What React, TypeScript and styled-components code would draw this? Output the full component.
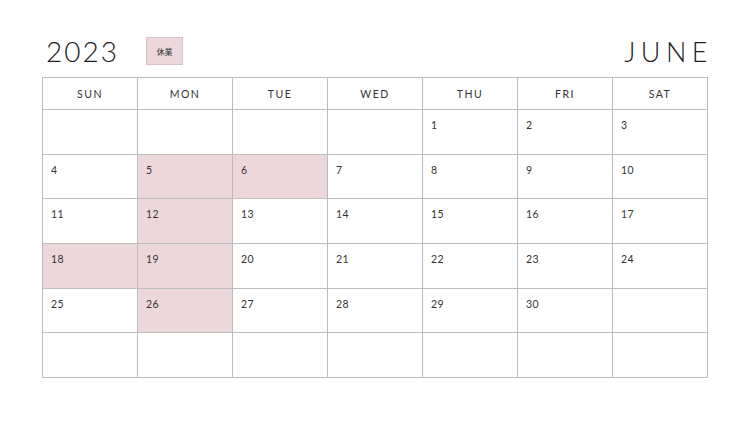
import React from 'react';
import styled, { createGlobalStyle } from 'styled-components';

const GlobalStyle = createGlobalStyle`
  html, body {
    margin: 0;
    padding: 0;
    background: #fff;
  }
  body {
    font-family: 'Lato', 'Noto Sans CJK JP', sans-serif;
    color: #333;
  }
`;

const Page = styled.div`
  width: 750px;
  height: 422px;
  box-sizing: border-box;
  padding: 30px 42px 0 42px;
  display: flex;
  flex-direction: column;
`;

const Header = styled.div`
  display: flex;
  align-items: center;
  height: 42px;
  margin-bottom: 5px;
`;

const Year = styled.div`
  font-size: 28px;
  font-weight: 300;
  letter-spacing: 2px;
  color: #222;
  padding-left: 4px;
  line-height: 1;
`;

const Badge = styled.div`
  margin-left: 27px;
  width: 35px;
  height: 26px;
  background: #ecd8da;
  border: 1px solid #d8c3c6;
  display: flex;
  align-items: center;
  justify-content: center;
  font-size: 8px;
  color: #333;
  font-family: 'Noto Sans CJK JP', sans-serif;
`;

const Month = styled.div`
  margin-left: auto;
  font-size: 27px;
  font-weight: 300;
  letter-spacing: 5.5px;
  color: #222;
  line-height: 1;
  margin-right: -5px;
`;

const Grid = styled.div`
  display: grid;
  grid-template-columns: repeat(7, 95px);
  grid-template-rows: 32px repeat(6, 44.7px);
  border-top: 1px solid #bdbdbd;
  border-left: 1px solid #bdbdbd;
  width: max-content;
`;

const HeadCell = styled.div`
  border-right: 1px solid #bdbdbd;
  border-bottom: 1px solid #bdbdbd;
  display: flex;
  align-items: center;
  justify-content: center;
  font-size: 10.5px;
  letter-spacing: 1.5px;
  color: #333;
`;

const DayCell = styled.div<{ $off?: boolean }>`
  border-right: 1px solid #bdbdbd;
  border-bottom: 1px solid #bdbdbd;
  background: ${(p) => (p.$off ? '#ecd8da' : '#fff')};
  padding: 9px 0 0 8px;
  font-size: 10.5px;
  letter-spacing: 0.5px;
  color: #333;
`;

const days = ['SUN', 'MON', 'TUE', 'WED', 'THU', 'FRI', 'SAT'];
const offDays = [5, 6, 12, 18, 19, 26];

export default function App() {
  const cells: (number | null)[] = [];
  for (let i = 0; i < 4; i++) cells.push(null);
  for (let d = 1; d <= 30; d++) cells.push(d);
  while (cells.length < 42) cells.push(null);

  return (
    <>
      <GlobalStyle />
      <Page>
        <Header>
          <Year>2023</Year>
          <Badge>休業</Badge>
          <Month>JUNE</Month>
        </Header>
        <Grid>
          {days.map((d) => (
            <HeadCell key={d}>{d}</HeadCell>
          ))}
          {cells.map((d, i) => (
            <DayCell key={i} $off={d !== null && offDays.includes(d)}>
              {d}
            </DayCell>
          ))}
        </Grid>
      </Page>
    </>
  );
}
